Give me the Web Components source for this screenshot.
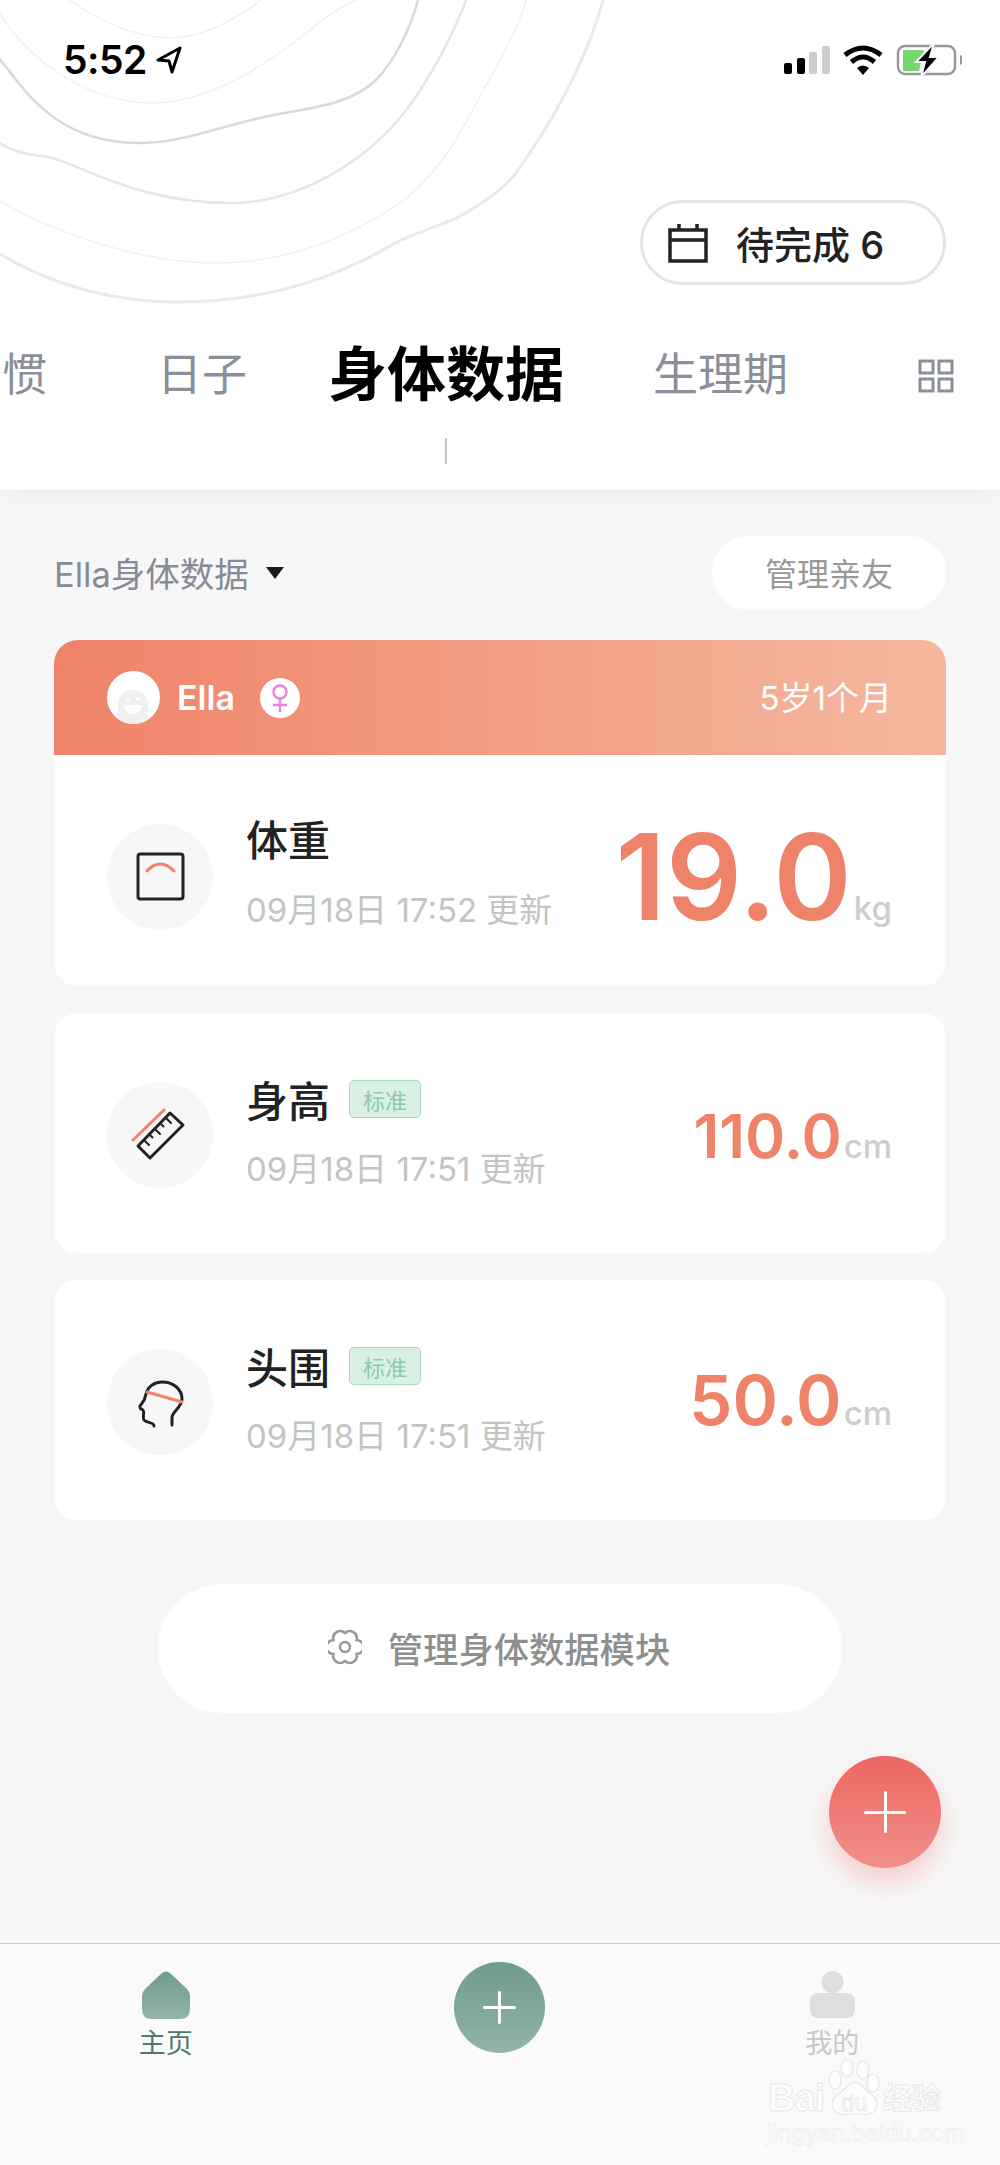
<!DOCTYPE html>
<html lang="zh">
<head>
<meta charset="utf-8">
<title>身体数据</title>
<style>
  html, body { margin: 0; padding: 0; background: #f7f7f7; }
  body { font-family: Inter, "Noto Sans CJK SC", sans-serif; }
</style>
</head>
<body>
<app-screen>
  <top-header></top-header>
  <page-body>
    <data-toolbar></data-toolbar>
    <person-card name="Ella" age="5岁1个月">
      <metric-row first name="体重" date="09月18日 17:52 更新" value="19.0" unit="kg" size="119">
        <svg slot="icon" width="106" height="106" viewBox="0 0 106 106" fill="none" stroke-linecap="round">
          <rect x="31" y="30" width="45" height="45" rx="2.500" stroke="#222" stroke-width="3"/>
          <path d="M40 47 Q53 33 67 47" stroke="#f08368" stroke-width="3"/>
        </svg>
      </metric-row>
    </person-card>
    <data-card>
      <metric-row name="身高" tag="标准" date="09月18日 17:51 更新" value="110.0" unit="cm" size="61" shift="2">
        <svg slot="icon" width="106" height="106" viewBox="0 0 106 106" fill="none" stroke-linecap="round" stroke-linejoin="round">
          <path d="M26 58 L57 28" stroke="#f08368" stroke-width="3"/>
          <path d="M63 31 L76 43 L43 76 L31 64 Z" stroke="#222" stroke-width="3"/>
          <path d="M37 58 l5 5 M42.500 52.500 l3 3 M48 47 l5 5 M53.500 41.500 l3 3 M59 36 l5 5" stroke="#222" stroke-width="2"/>
        </svg>
      </metric-row>
    </data-card>
    <data-card>
      <metric-row name="头围" tag="标准" date="09月18日 17:51 更新" value="50.0" unit="cm" size="69" shift="-4">
        <svg slot="icon" width="106" height="106" viewBox="0 0 106 106" fill="none" stroke-linecap="round" stroke-linejoin="round">
          <path d="M47 77 C47 73 39 74 37 71 C35 68 38 64 36 61 C34 60 32 59 33 57 C35 54 38 52 39 45 C41 37 48 33 55 33 C66 33 75 40 75 50 C75 58 66 62 65 68 L65 76" stroke="#222" stroke-width="3"/>
          <path d="M40 43 L75 53" stroke="#f08368" stroke-width="3"/>
        </svg>
      </metric-row>
    </data-card>
    <manage-button>管理身体数据模块</manage-button>
  </page-body>
  <bottom-tabs></bottom-tabs>
  <add-fab></add-fab>
  <baidu-mark></baidu-mark>
</app-screen>

<script>
// every element here is only a shadow root with its own css + markup
function makeElement(name, html) {
  customElements.define(name, class extends HTMLElement {
    constructor() {
      super();
      this.attachShadow({ mode: 'open' }).innerHTML = typeof html === 'function' ? html(this) : html;
    }
  });
}

const FONT = 'Inter, "Noto Sans CJK SC", sans-serif';

makeElement('app-screen', `
  <style>
    :host { display: flex; flex-direction: column; position: relative; width: 1000px; height: 2165px; overflow: hidden; background: #f7f7f7; font-family: ${FONT}; }
  </style>
  <slot></slot>
`);

makeElement('status-bar', `
  <style>
    :host { display: flex; align-items: center; height: 32px; padding: 44px 38px 1px 63px; }
    .time { font-size: 39px; font-weight: 600; line-height: 32px; color: #000; letter-spacing: -.5px; }
    .arrow { margin-left: 8px; }
    .icons { margin-left: auto; display: flex; align-items: center; }
    svg { display: block; }
  </style>
  <span class="time">5:52</span>
  <svg class="arrow" width="28" height="30" viewBox="0 0 28 30" fill="none" stroke="#000" stroke-width="3" stroke-linejoin="round"><path d="M25 3 L3 15 L14 16 L17 27 Z"/></svg>
  <div class="icons">
    <svg width="178" height="32" viewBox="0 0 178 32">
      <rect x="0" y="19" width="8" height="11" rx="2" fill="#000"/>
      <rect x="13" y="14" width="8" height="16" rx="2" fill="#000"/>
      <rect x="25" y="8" width="8" height="22" rx="2" fill="#ccc"/>
      <rect x="38" y="2" width="8" height="28" rx="2" fill="#ccc"/>
      <g fill="none" stroke="#000" stroke-width="5">
        <path d="M61 11 Q79 -3 97 11"/>
        <path d="M67.500 18 Q79 8 90.500 18"/>
      </g>
      <path d="M73 24 Q79 19 85 24 L79 31 Z" fill="#000"/>
      <rect x="114" y="2" width="57" height="28" rx="7" fill="#fff" stroke="#999" stroke-width="2.500"/>
      <path d="M119 6 H140 L135 27 H119 Z" fill="#76d672"/>
      <path d="M176 11 q3 1 3 5 q0 4 -3 5 Z" fill="#999"/>
      <path d="M150 -1 L132 18 H141 L137 33 L155 13 H146 Z" fill="#000" stroke="#fff" stroke-width="2"/>
    </svg>
  </div>
`);

makeElement('todo-pill', `
  <style>
    :host { display: flex; align-items: center; box-sizing: border-box; width: 306px; height: 85px; padding-left: 25px; border: 3px solid #e4e4e4; border-radius: 43px; background: #fff; color: #222; font-size: 38px; font-weight: 500; }
    svg { display: block; margin-right: 28px; }
  </style>
  <svg width="40" height="40" viewBox="0 0 40 40" fill="none" stroke="#222" stroke-width="3.500"><path d="M2 7 H38 V38 H2 Z M2 17 H38 M11 1 V8 M29 1 V8"/></svg>
  <span>待完成 6</span>
`);

makeElement('tab-strip', `
  <style>
    :host { display: block; color: #8a8f9a; font-size: 45px; line-height: 70px; white-space: nowrap; }
    .row { display: flex; align-items: center; height: 70px; padding-left: 2px; }
    .now { margin-left: 81px; width: 236px; color: #000; font-size: 59px; font-weight: 700; }
    .a { margin-left: 110px; }
    .b { margin-left: 89px; }
    svg { display: block; margin: 1px 0 0 130px; }
    .bar { width: 2px; height: 26px; margin: 28px 0 0 445px; background: #c8c8c8; }
  </style>
  <div class="row">
    <span>惯</span>
    <span class="a">日子</span>
    <span class="now">身体数据</span>
    <span class="b">生理期</span>
    <svg width="36" height="34" viewBox="0 0 36 34" fill="none" stroke="#8a8f9a" stroke-width="3">
      <rect x="2" y="2" width="13" height="12"/><rect x="21" y="2" width="13" height="12"/>
      <rect x="2" y="20" width="13" height="12"/><rect x="21" y="20" width="13" height="12"/>
    </svg>
  </div>
  <div class="bar"></div>
`);

makeElement('top-header', `
  <style>
    :host { display: block; position: relative; z-index: 1; height: 490px; flex: none; background: #fff; box-shadow: 0 6px 34px rgba(0,0,0,.05); }
    .lines { position: absolute; left: 0; top: 0; }
    .inner { position: relative; }
    todo-pill { margin: 123px 0 0 640px; }
    tab-strip { margin-top: 55px; }
  </style>
  <svg class="lines" width="620" height="320" viewBox="0 0 620 320" fill="none" stroke-linecap="round">
    <path d="M-2 253 C60 290 120 302 179 302 C250 302 320 285 383 250 C415 230 440 228 466 213 C490 198 510 185 523 163 C560 110 590 50 603 0" stroke="#efe9e3" stroke-width="3"/>
    <path d="M-2 200 C40 225 130 263 217 263 C280 263 350 240 408 197 C445 165 465 125 478 100 C500 60 518 30 526 0" stroke="#f3f0ed" stroke-width="1.500"/>
    <path d="M-2 142 C12 152 28 155 42 156 C72 158 130 203 230 203 C300 203 370 160 410 105 C435 70 455 30 466 0" stroke="#ebe5df" stroke-width="2.500"/>
    <path d="M-2 57 C25 90 55 143 140 143 C185 143 225 124 274 115 C310 108 350 105 376 80 C395 60 410 30 418 0" stroke="#e0d7d0" stroke-width="2.500"/>
    <path d="M-2 10 C20 50 80 103 153 103 C215 103 280 55 320 22 C335 10 345 5 357 0" stroke="#f3f0ed" stroke-width="1.500"/>
    <path d="M70 0 C90 15 130 38 172 38 C200 38 235 20 261 0" stroke="#f3f0ed" stroke-width="1.500"/>
  </svg>
  <div class="inner">
    <status-bar></status-bar>
    <todo-pill></todo-pill>
    <tab-strip></tab-strip>
  </div>
`);

makeElement('page-body', `
  <style>
    :host { display: flex; flex-direction: column; flex: 1; padding: 46px 54px 0; }
    ::slotted(data-card) { margin-top: 27px; }
    ::slotted(person-card) { margin-top: 30px; }
  </style>
  <slot></slot>
`);

makeElement('data-toolbar', `
  <style>
    :host { display: flex; align-items: center; height: 74px; color: #868b96; font-size: 34.500px; }
    .label { padding-bottom: 3px; }
    .tri { width: 0; height: 0; margin-left: 17px; border: 9px solid transparent; border-top: 12px solid #1c1c1c; border-bottom: 0; }
    .manage { margin-left: auto; display: flex; align-items: center; justify-content: center; box-sizing: border-box; width: 234px; height: 74px; padding-bottom: 3px; border-radius: 37px; background: #fff; color: #999; font-size: 32px; }
  </style>
  <span class="label">Ella身体数据</span>
  <span class="tri"></span>
  <span class="manage">管理亲友</span>
`);

makeElement('data-card', `
  <style>
    :host { display: block; height: 240px; border-radius: 24px; background: #fff; }
  </style>
  <slot></slot>
`);

makeElement('person-card', host => `
  <style>
    :host { display: block; height: 346px; border-radius: 24px; overflow: hidden; background: #fff; }
    .head { display: flex; align-items: center; height: 115px; padding: 0 54px 0 53px; background: linear-gradient(90deg, #ef8369, #f5b89f); color: #fff; }
    svg { display: block; }
    .name { margin: 0 25px 0 17px; font-size: 34px; font-weight: 600; }
    .age { margin-left: auto; padding-bottom: 3px; font-size: 33px; }
  </style>
  <div class="head">
    <svg width="53" height="53" viewBox="0 0 53 53">
      <clipPath id="c"><circle cx="26.500" cy="26.500" r="26.500"/></clipPath>
      <circle cx="26.500" cy="26.500" r="26.500" fill="#fff"/>
      <g clip-path="url(#c)">
        <path d="M11 53 V34 C11 24 18 19 26 19 C34 19 41 24 41 34 V53 Z" fill="#f0f0f0"/>
        <circle cx="21" cy="28" r="1.800" fill="#fff"/><circle cx="31" cy="28" r="1.800" fill="#fff"/>
        <path d="M17 34 H35 C35 40 31 43 26 43 C21 43 17 40 17 34 Z" fill="#fff"/>
      </g>
    </svg>
    <span class="name">${host.getAttribute('name')}</span>
    <svg width="40" height="40" viewBox="0 0 40 40" fill="none">
      <circle cx="20" cy="20" r="20" fill="#fff"/>
      <g stroke="#ee82dd" stroke-width="2.500"><circle cx="20" cy="14" r="6.500"/><path d="M20 20 V34 M13 27 H27"/></g>
    </svg>
    <span class="age">${host.getAttribute('age')}</span>
  </div>
  <slot></slot>
`);

makeElement('metric-row', host => {
  const first = host.hasAttribute('first');
  const tag = host.getAttribute('tag');
  return `
  <style>
    :host { display: flex; align-items: center; box-sizing: border-box; height: ${first ? 231 : 240}px; padding: ${first ? 12 : 4}px 54px 0 53px; }
    .icon { flex: none; width: 106px; height: 106px; border-radius: 50%; background: #f7f7f7; }
    .txt { margin-left: 33px; margin-top: ${first ? -6 : -11}px; }
    .top { display: flex; align-items: center; height: 60px; color: #222; font-size: 42px; font-weight: 500; ${first ? 'margin-top:-8px;' : ''} }
    .tag { display: flex; align-items: center; justify-content: center; box-sizing: border-box; width: 72px; height: 38px; margin: 2px 0 0 19px; border: 1.500px solid #a5dabe; border-radius: 5px; background: #daf0e4; color: #8ccbaa; font-size: 22px; font-weight: 400; }
    .date { margin-top: ${first ? 20 : 19}px; color: #c4c4c4; font-size: 33px; line-height: 44px; white-space: nowrap; }
    .val { margin-left: auto; display: flex; align-items: baseline; color: #ef8369; font-size: ${host.getAttribute('size')}px; font-weight: 600; margin-top: ${host.getAttribute('shift') || 0}px; }
    .unit { margin-left: 2px; color: #cdcdcd; font-size: 33px; font-weight: 500; }
  </style>
  <div class="icon"><slot name="icon"></slot></div>
  <div class="txt">
    <div class="top"><span>${host.getAttribute('name')}</span>${tag ? `<span class="tag">${tag}</span>` : ''}</div>
    <div class="date">${host.getAttribute('date')}</div>
  </div>
  <div class="val"><span>${host.getAttribute('value')}</span><span class="unit">${host.getAttribute('unit')}</span></div>`;
});

makeElement('manage-button', `
  <style>
    :host { display: flex; align-items: center; justify-content: center; box-sizing: border-box; width: 684px; height: 129px; margin: 64px 0 0 104px; padding: 0 2px 3px 0; border-radius: 65px; background: #fff; color: #8f8f8f; font-size: 35.300px; font-weight: 500; }
    svg { display: block; margin-right: 26px; }
  </style>
  <svg width="34" height="36" viewBox="0 0 34 36" fill="none" stroke="#999" stroke-width="2.500">
    <path d="M17 4 A7 7 0 0 1 28.500 11 A7 7 0 0 1 28.500 25 A7 7 0 0 1 17 32 A7 7 0 0 1 5.500 25 A7 7 0 0 1 5.500 11 A7 7 0 0 1 17 4 Z"/>
    <circle cx="17" cy="18" r="5"/>
  </svg>
  <slot></slot>
`);

makeElement('bottom-tabs', `
  <style>
    :host { display: grid; grid-template-columns: repeat(3, 1fr); box-sizing: border-box; height: 222px; flex: none; border-top: 1.500px solid #d0d0d0; background: #fafafa; }
    .item { display: flex; flex-direction: column; align-items: center; padding: 27px 2px 0 0; font-size: 27px; line-height: 30px; color: #c8c8c8; }
    .home { color: #4f7a6b; }
    .item svg { display: block; margin-bottom: 8px; height: 50px; }
    .mid { display: flex; justify-content: center; padding-top: 18px; }
    .add { position: relative; width: 91px; height: 91px; border-radius: 50%; background: linear-gradient(#6f9b8d, #93b5a8); }
    .add::before, .add::after { content: ""; position: absolute; background: #fff; border-radius: 2px; }
    .add::before { left: 29px; top: 44px; width: 33px; height: 3px; }
    .add::after { left: 44px; top: 29px; width: 3px; height: 33px; }
  </style>
  <div class="item home">
    <svg width="48" height="50" viewBox="0 0 48 50">
      <defs><linearGradient id="g" x1="0" y1="0" x2="0" y2="1"><stop offset="0" stop-color="#6f9b8d"/><stop offset="1" stop-color="#93b5a8"/></linearGradient></defs>
      <path d="M20 2 Q24 -1 28 2 L45 18 Q48 21 48 25 V38 Q48 48 38 48 H10 Q0 48 0 38 V25 Q0 21 3 18 Z" fill="url(#g)"/>
    </svg>
    <span>主页</span>
  </div>
  <div class="mid"><div class="add"></div></div>
  <div class="item">
    <svg width="45" height="50" viewBox="0 0 45 50" fill="#dedede">
      <circle cx="22.500" cy="11" r="11"/>
      <rect x="0" y="22" width="45" height="25" rx="8"/>
    </svg>
    <span>我的</span>
  </div>
`);

makeElement('add-fab', `
  <style>
    :host { position: absolute; left: 829px; top: 1756px; width: 112px; height: 112px; border-radius: 50%; background: linear-gradient(#ee6661, #f08f8a); box-shadow: 0 14px 28px rgba(238,102,97,.28); }
    :host::before, :host::after { content: ""; position: absolute; background: #fff; border-radius: 2px; }
    :host::before { left: 35px; top: 54.500px; width: 42px; height: 3px; }
    :host::after { left: 54.500px; top: 35px; width: 3px; height: 42px; }
  </style>
`);

// watermark stamped over the bottom right of the shot
makeElement('baidu-mark', `
  <style>
    :host { position: absolute; left: 766px; top: 2056px; width: 184px; height: 92px; font-family: "Liberation Sans", "Noto Sans CJK SC", sans-serif; color: #fdfdfd; -webkit-text-stroke: .8px #e6e6e6; }
    span { position: absolute; white-space: nowrap; }
    .bai { left: 2px; top: 22px; font-size: 38px; font-weight: 700; line-height: 40px; letter-spacing: -1px; }
    .du { left: 75px; top: 34px; font-size: 24px; line-height: 26px; }
    .jy { left: 117px; top: 26px; font-size: 29px; line-height: 34px; font-weight: 700; }
    .url { left: 1px; top: 62px; font-size: 24.500px; line-height: 30px; -webkit-text-stroke: .5px #e8e8e8; }
    svg { position: absolute; left: 0; top: 0; }
  </style>
  <svg width="184" height="62" viewBox="0 0 184 62" fill="#fdfdfd" stroke="#e6e6e6" stroke-width="1.200">
    <ellipse cx="69" cy="24" rx="6" ry="9"/><ellipse cx="81" cy="12" rx="6" ry="9"/><ellipse cx="97" cy="14" rx="6" ry="9"/><ellipse cx="107" cy="27" rx="6" ry="9"/>
    <path d="M66 48 C66 40 76 37 82 30 C86 25 92 25 96 30 C102 37 111 40 111 48 C111 56 103 60 96 58 H82 C74 60 66 56 66 48 Z"/>
  </svg>
  <span class="bai">Bai</span><span class="du">du</span><span class="jy">经验</span>
  <span class="url">jingyan.baidu.com</span>
`);
</script>
</body>
</html>
